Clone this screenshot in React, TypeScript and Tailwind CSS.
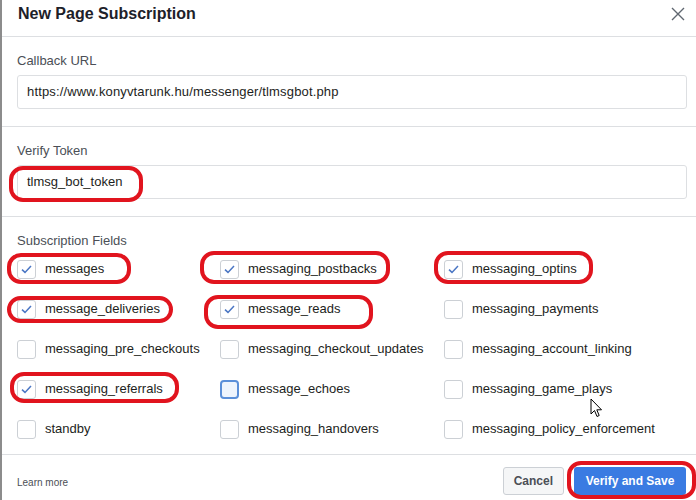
import React from "react";

const fields: { name: string; checked: boolean; focus?: boolean }[] = [
  { name: "messages", checked: true },
  { name: "messaging_postbacks", checked: true },
  { name: "messaging_optins", checked: true },
  { name: "message_deliveries", checked: true },
  { name: "message_reads", checked: true },
  { name: "messaging_payments", checked: false },
  { name: "messaging_pre_checkouts", checked: false },
  { name: "messaging_checkout_updates", checked: false },
  { name: "messaging_account_linking", checked: false },
  { name: "messaging_referrals", checked: true },
  { name: "message_echoes", checked: false, focus: true },
  { name: "messaging_game_plays", checked: false },
  { name: "standby", checked: false },
  { name: "messaging_handovers", checked: false },
  { name: "messaging_policy_enforcement", checked: false },
];

function Checkbox({ checked, focus }: { checked: boolean; focus?: boolean }) {
  return (
    <div
      className={
        focus
          ? "w-[19px] h-[19px] rounded-[4px] border-2 border-[#5b8fd9] bg-[#eef4fd] flex items-center justify-center shrink-0"
          : "w-[19px] h-[19px] rounded-[3px] border border-[#ccd0d5] bg-white flex items-center justify-center shrink-0"
      }
    >
      {checked && (
        <svg width="11" height="9" viewBox="0 0 11 9">
          <path d="M1 4.6 L4 7.4 L10 1" fill="none" stroke="#4a76c4" strokeWidth="1.5" />
        </svg>
      )}
    </div>
  );
}

function Ring({ className }: { className: string }) {
  return <div className={"absolute border-[4px] border-[#e1141e] rounded-[14px] pointer-events-none " + className} />;
}

export default function App() {
  return (
    <div
      className="relative w-[696px] h-[500px] bg-white overflow-hidden border-l-2 border-[#8c8c8c] text-[#1c1e21]"
      style={{ fontFamily: '"Liberation Sans", Arial, sans-serif' }}
    >
      {/* Header */}
      <div className="h-[37px] border-b border-[#dddfe2] flex items-start justify-between pl-[16px] pr-[10px] pt-[4px]">
        <div className="text-[16px] leading-[20px] font-bold text-[#1d2129]">New Page Subscription</div>
        <svg width="14" height="14" viewBox="0 0 14 14" className="mt-[3px] mr-[1px]">
          <path d="M1 1 L13 13 M13 1 L1 13" stroke="#606770" strokeWidth="1.4" fill="none" />
        </svg>
      </div>

      {/* Callback URL */}
      <div className="border-b border-[#dddfe2] pt-[15px] pb-[17px] pl-[15px] pr-[9px]">
        <div className="text-[13px] leading-[18px] text-[#4b4f56] mb-[5px]">Callback URL</div>
        <div className="h-[34px] border border-[#dddfe2] rounded-[3px] flex items-center px-[9px] text-[13px] tracking-[0.15px] text-[#1c1e21]">
          https://www.konyvtarunk.hu/messenger/tlmsgbot.php
        </div>
      </div>

      {/* Verify Token */}
      <div className="border-b border-[#dddfe2] pt-[15px] pb-[17px] pl-[15px] pr-[9px]">
        <div className="text-[13px] leading-[18px] text-[#4b4f56] mb-[5px]">Verify Token</div>
        <div className="h-[34px] border border-[#dddfe2] rounded-[3px] flex items-center px-[9px] text-[13px] text-[#1c1e21]">
          tlmsg_bot_token
        </div>
      </div>

      {/* Subscription Fields */}
      <div className="border-b border-[#dddfe2] pt-[16px] pb-[5px] pl-[15px]">
        <div className="text-[13px] leading-[16px] text-[#4b4f56]">Subscription Fields</div>
        <div className="grid grid-cols-[203px_224px_1fr]">
          {fields.map((f) => (
            <div key={f.name} className="h-[40px] flex items-center gap-[9px]">
              <Checkbox checked={f.checked} focus={f.focus} />
              <span className="text-[13px] text-[#1c1e21]">{f.name}</span>
            </div>
          ))}
        </div>
      </div>

      {/* Footer */}
      <div className="flex items-center justify-between pl-[15px] pr-[10px] pt-[12px]">
        <div className="text-[10px] text-[#4b4f56] pt-[2px]">Learn more</div>
        <div className="flex gap-[10px]">
          <button className="h-[28px] px-[10px] rounded-[3px] border border-[#ccd0d5] bg-[#f5f6f7] text-[12px] font-bold text-[#4b4f56]">
            Cancel
          </button>
          <button className="h-[28px] w-[112px] rounded-[3px] bg-[#3a7be2] text-[12px] font-bold text-white">
            Verify and Save
          </button>
        </div>
      </div>

      {/* Annotation rings */}
      <Ring className="left-[7px] top-[166px] w-[134px] h-[36px]" />
      <Ring className="left-[5px] top-[253px] w-[124px] h-[31px]" />
      <Ring className="left-[198px] top-[251px] w-[190px] h-[33px]" />
      <Ring className="left-[432px] top-[251px] w-[159px] h-[33px]" />
      <Ring className="left-[5px] top-[296px] w-[166px] h-[27px]" />
      <Ring className="left-[202px] top-[295px] w-[169px] h-[34px]" />
      <Ring className="left-[8px] top-[372px] w-[169px] h-[31px]" />
      <Ring className="left-[565px] top-[461px] w-[129px] h-[38px]" />

      {/* Mouse cursor */}
      <svg className="absolute left-[588px] top-[398px]" width="13" height="20" viewBox="0 0 13 20">
        <path d="M1 1 L1 16 L4.5 12.5 L7 18.5 L9.2 17.5 L6.8 11.8 L11.5 11.8 Z" fill="white" stroke="black" strokeWidth="1" strokeLinejoin="round" />
      </svg>
    </div>
  );
}
